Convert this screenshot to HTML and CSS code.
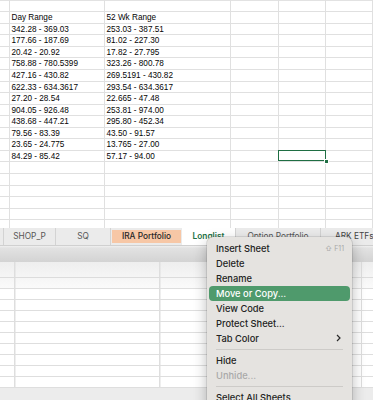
FILE: index.html
```html
<!DOCTYPE html>
<html lang="en">
<head>
    <meta charset="UTF-8">
    <meta name="viewport" content="width=device-width, initial-scale=1.0">
    <title>Sheet tab menu</title>
    <link rel="stylesheet" href="styles.css">
</head>
<body>
    <div class="sheet">
        <div class="c"></div><div class="c"></div><div class="c"></div><div class="c"></div><div class="c"></div><div class="c"></div>
        <div class="c"></div><div class="c">Day Range</div><div class="c">52 Wk Range</div><div class="c"></div><div class="c"></div><div class="c"></div>
        <div class="c"></div><div class="c">342.28 - 369.03</div><div class="c">253.03 - 387.51</div><div class="c"></div><div class="c"></div><div class="c"></div>
        <div class="c"></div><div class="c">177.66 - 187.69</div><div class="c">81.02 - 227.30</div><div class="c"></div><div class="c"></div><div class="c"></div>
        <div class="c"></div><div class="c">20.42 - 20.92</div><div class="c">17.82 - 27.795</div><div class="c"></div><div class="c"></div><div class="c"></div>
        <div class="c"></div><div class="c">758.88 - 780.5399</div><div class="c">323.26 - 800.78</div><div class="c"></div><div class="c"></div><div class="c"></div>
        <div class="c"></div><div class="c">427.16 - 430.82</div><div class="c">269.5191 - 430.82</div><div class="c"></div><div class="c"></div><div class="c"></div>
        <div class="c"></div><div class="c">622.33 - 634.3617</div><div class="c">293.54 - 634.3617</div><div class="c"></div><div class="c"></div><div class="c"></div>
        <div class="c"></div><div class="c">27.20 - 28.54</div><div class="c">22.665 - 47.48</div><div class="c"></div><div class="c"></div><div class="c"></div>
        <div class="c"></div><div class="c">904.05 - 926.48</div><div class="c">253.81 - 974.00</div><div class="c"></div><div class="c"></div><div class="c"></div>
        <div class="c"></div><div class="c">438.68 - 447.21</div><div class="c">295.80 - 452.34</div><div class="c"></div><div class="c"></div><div class="c"></div>
        <div class="c"></div><div class="c">79.56 - 83.39</div><div class="c">43.50 - 91.57</div><div class="c"></div><div class="c"></div><div class="c"></div>
        <div class="c"></div><div class="c">23.65 - 24.775</div><div class="c">13.765 - 27.00</div><div class="c"></div><div class="c"></div><div class="c"></div>
        <div class="c"></div><div class="c">84.29 - 85.42</div><div class="c">57.17 - 94.00</div><div class="c"></div><div class="c sel"></div><div class="c"></div>
        <div class="c"></div><div class="c"></div><div class="c"></div><div class="c"></div><div class="c"></div><div class="c"></div>
        <div class="c"></div><div class="c"></div><div class="c"></div><div class="c"></div><div class="c"></div><div class="c"></div>
        <div class="c"></div><div class="c"></div><div class="c"></div><div class="c"></div><div class="c"></div><div class="c"></div>
        <div class="c"></div><div class="c"></div><div class="c"></div><div class="c"></div><div class="c"></div><div class="c"></div>
        <div class="c"></div><div class="c"></div><div class="c"></div><div class="c"></div><div class="c"></div><div class="c"></div>
        <div class="c last"></div><div class="c last"></div><div class="c last"></div><div class="c last"></div><div class="c last"></div><div class="c last"></div>
    </div>

    <div class="tabs">
        <div class="tab tab-stub"></div>
        <div class="tab tab-shop">SHOP_P</div>
        <div class="tab tab-sq">SQ</div>
        <div class="tab tab-ira"><span>IRA Portfolio</span></div>
        <div class="tab tab-active">Longlist</div>
        <div class="tab tab-option">Option Portfolio</div>
        <div class="tab tab-ark">ARK ETFs</div>
    </div>

    <div class="dock"></div>
    <div class="ghost">
        <div class="ghost-head"></div>
        <div class="ghost-body"></div>
    </div>
    <div class="foot"></div>

    <ul class="menu">
        <li class="item">Insert Sheet <span class="key">⇧ F11</span></li>
        <li class="item">Delete</li>
        <li class="item">Rename</li>
        <li class="item active">Move or Copy...</li>
        <li class="item">View Code</li>
        <li class="item">Protect Sheet...</li>
        <li class="item">Tab Color
            <svg class="chev" width="5" height="8" viewBox="0 0 5 8"><path d="M1 1l3 3-3 3" fill="none" stroke="#2a2a2a" stroke-width="1.2"/></svg>
        </li>
        <li class="sep"></li>
        <li class="item">Hide</li>
        <li class="item disabled">Unhide...</li>
        <li class="sep"></li>
        <li class="item">Select All Sheets</li>
    </ul>
</body>
</html>
```

FILE: styles.css
```css
body {
    margin: 0;
    width: 373px;
    height: 400px;
    overflow: hidden;
    position: relative;
    background: #fff;
    font-family: "Liberation Sans", Arial, sans-serif;
}

/* top sheet */
.sheet {
    display: grid;
    grid-template-columns: 10px 95px 126px 48px 47px 47px;
    grid-template-rows: 12.3px repeat(18, 11.55px) 7.8px;
    background: linear-gradient(#e2e2e2, #e2e2e2) 0 0 / 100% 1px no-repeat;
}
.c {
    box-sizing: border-box;
    border-right: 1px solid #e0e0e0;
    border-bottom: 1px solid #e0e0e0;
    padding: 1px 0 0 1.5px;
    font-size: 8.2px;
    line-height: 10.5px;
    color: #050505;
    white-space: nowrap;
    overflow: hidden;
}
.c.last {
    border-bottom: none;
}
.sel {
    position: relative;
    overflow: visible;
}
.sel::before {
    content: "";
    position: absolute;
    left: -1px;
    right: -1px;
    top: -0.5px;
    bottom: 0;
    border: 1.5px solid #1f6e43;
}
.sel::after {
    content: "";
    position: absolute;
    right: -3.5px;
    bottom: -2.5px;
    width: 3px;
    height: 3px;
    background: #1f6e43;
    border: 1px solid #fff;
}

/* sheet tabs */
.tabs {
    display: flex;
    height: 17px;
    background: #ebebeb;
    border-bottom: 1px solid #d0d0d0;
    font-family: Inter, "Liberation Sans", sans-serif;
    font-size: 8.3px;
    color: #555;
}
.tab {
    box-sizing: border-box;
    display: flex;
    align-items: center;
    justify-content: center;
    border-right: 1px solid #d3d3d3;
    white-space: nowrap;
    overflow: hidden;
}
.tab-stub { width: 4px; }
.tab-shop { width: 52px; }
.tab-sq { width: 55px; }
.tab-ira {
    width: 71px;
    padding: 2px 1px;
    border-right: none;
}
.tab-ira span {
    flex: 1;
    align-self: stretch;
    display: flex;
    align-items: center;
    justify-content: center;
    background: #f7c7a6;
    color: #262626;
    font-weight: 500;
}
.tab-active {
    width: 54px;
    background: #fff;
    color: #1e7145;
    font-weight: 600;
}
.tab-option { width: 85px; }
.tab-ark {
    flex: 1;
    justify-content: flex-start;
    padding-left: 14px;
    border-right: none;
    color: #444;
}

/* window behind */
.dock {
    height: 16px;
    background: linear-gradient(#f0f0f0 0, #e2e2e2 2px, #d3d3d3 100%);
}
.ghost {
    height: 126px;
    background-image:
        linear-gradient(#dedede, #dedede),
        linear-gradient(#dedede, #dedede),
        linear-gradient(#dedede, #dedede),
        linear-gradient(#eeeeee, #fbfbfb);
    background-size: 1.5px 100%, 1.5px 100%, 1px 100%, 100% 27px;
    background-position: 14px 0, 159px 0, 361px 0, 0 0;
    background-repeat: no-repeat;
}
.ghost-head {
    box-sizing: border-box;
    height: 16px;
    border-bottom: 1px solid #dcdcdc;
}
.ghost-body {
    height: 110px;
    background: repeating-linear-gradient(to bottom, transparent 0, transparent 10px, #dedede 10px, #dedede 11px);
}
.foot {
    height: 12px;
    background: #ececec;
}

/* context menu */
.menu {
    position: absolute;
    left: 207px;
    top: 237px;
    width: 145px;
    box-sizing: border-box;
    margin: 0;
    padding: 3.5px 2px 20px;
    list-style: none;
    background: #e5e3e0;
    border-radius: 6px;
    box-shadow: 0 0 0 0.5px rgba(0,0,0,0.18), 0 5px 14px rgba(0,0,0,0.28);
    font-family: Inter, "Liberation Sans", sans-serif;
    font-size: 9.3px;
    font-weight: 500;
    color: #232323;
}
.item {
    display: flex;
    align-items: center;
    justify-content: space-between;
    height: 15px;
    padding: 0 6px 0 7px;
    border-radius: 4px;
    white-space: nowrap;
}
.item.active {
    background: #4f9a6c;
    color: #fff;
}
.item.disabled {
    color: #a9a9a9;
}
.key {
    font-size: 7px;
    font-weight: 400;
    color: #a8a8a8;
}
.chev {
    margin-right: 3px;
}
.sep {
    height: 1px;
    margin: 3px 7px;
    background: #cdcbc8;
}
```
